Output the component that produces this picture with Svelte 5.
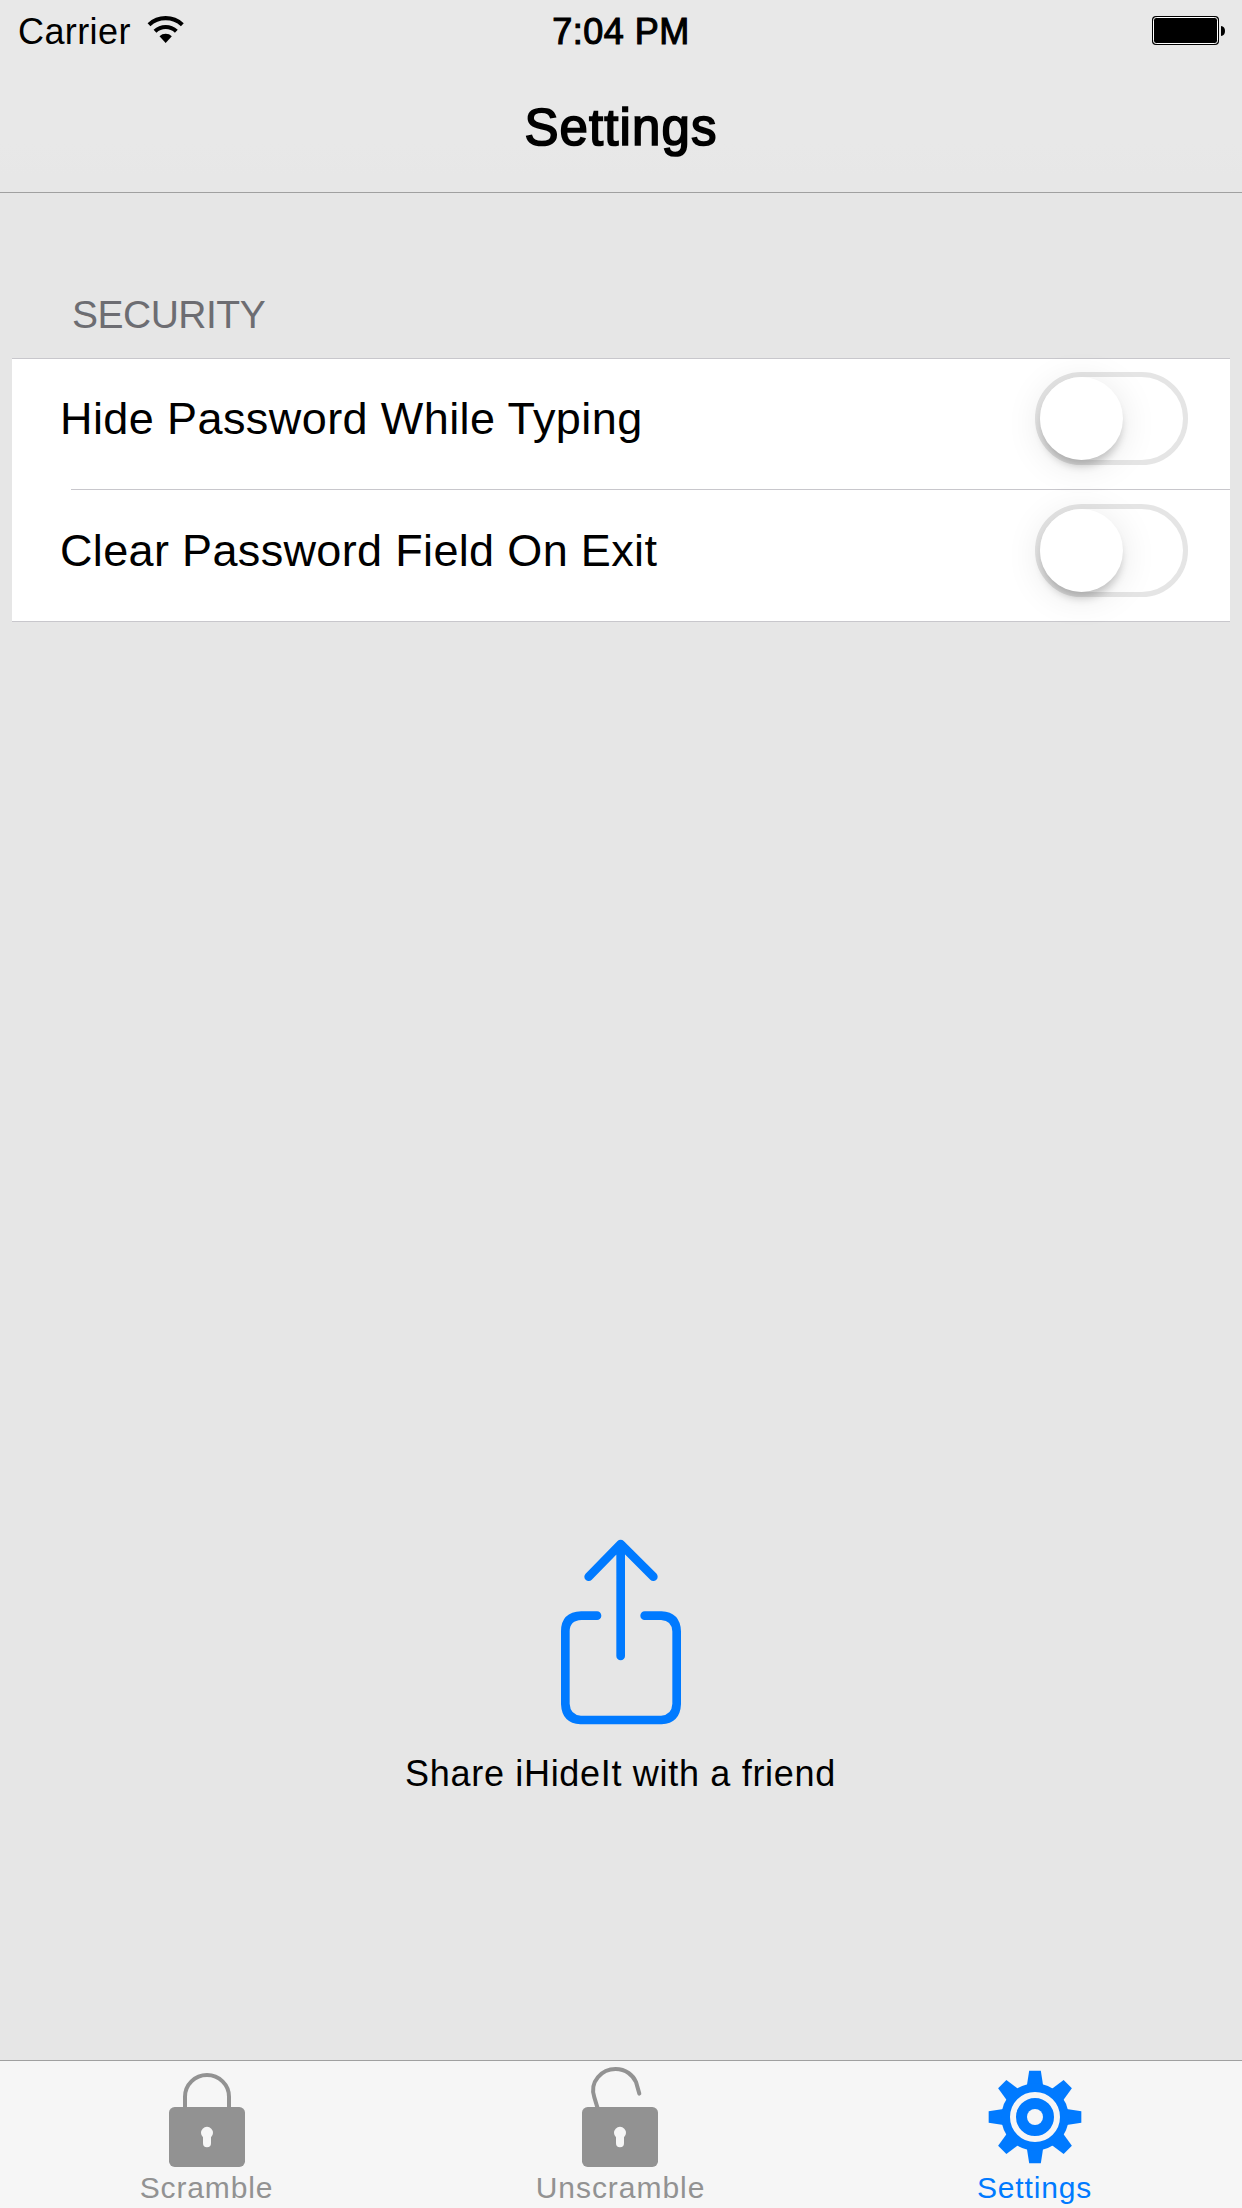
<script>
  let rows = $state([
    { id: 'hide', label: 'Hide Password While Typing', on: false },
    { id: 'clear', label: 'Clear Password Field On Exit', on: false }
  ]);
  const teeth = [0, 45, 90, 135, 180, 225, 270, 315];
</script>

<div class="screen">
  <header>
    <div class="status">
      <div class="left">
        <span class="carrier">Carrier</span>
        <svg class="wifi" viewBox="435 0 120 189" aria-hidden="true">
          <path d="M447 74A73.5 73.5 0 0 1 547 74" fill="none" stroke="#000" stroke-width="12.5" />
          <path d="M465 93.5A47 47 0 0 1 529 93.5" fill="none" stroke="#000" stroke-width="12.5" />
          <path d="M497 129L478.5 108.500A27 27 0 0 1 515.500 108.500Z" />
        </svg>
      </div>
      <span class="time">7:04 PM</span>
      <svg class="battery" viewBox="0 0 426 189" aria-hidden="true">
        <rect x="156" y="48" width="201" height="87" rx="12" />
        <rect x="160.500" y="52.500" width="192" height="78" rx="8" fill="none" stroke="#fff" stroke-width="3" />
        <path d="M363 78Q375 80 375 93T363 108Z" />
      </svg>
    </div>
    <h1>Settings</h1>
  </header>

  <main>
    <h2>SECURITY</h2>
    <section class="card">
      {#each rows as row (row.id)}
        <div class="row {row.id}">
          <span class="label">{row.label}</span>
          <button
            class="switch"
            class:on={row.on}
            role="switch"
            aria-checked={row.on}
            aria-label={row.label}
            onclick={() => (row.on = !row.on)}
          ><span class="knob"></span></button>
        </div>
      {/each}
    </section>

    <div class="share">
      <svg viewBox="3 0 540 660" aria-hidden="true">
        <g fill="none" stroke="#007aff" stroke-width="26" stroke-linecap="round" stroke-linejoin="round">
          <path d="M272 72V408M176 170L272 72L370 170" />
          <path d="M201 287H154Q106 289 106 334V552Q108 597 152 600H394Q438 597 440 552V334Q438 289 394 287H344" />
        </g>
      </svg>
      <span>Share iHideIt with a friend</span>
    </div>
  </main>

  <nav>
    <div class="tab">
      <svg viewBox="-9 33 540 327" aria-hidden="true">
        <path d="M195 175V140A66 65 0 0 1 327 140V175" fill="none" stroke="#929292" stroke-width="12" />
        <rect x="147" y="171" width="228" height="180" rx="17" fill="#929292" />
        <path d="M249 262A18 18 0 1 1 273 262V280A12 12 0 0 1 249 280Z" fill="#f6f6f6" />
      </svg>
      <span>Scramble</span>
    </div>
    <div class="tab wide">
      <svg viewBox="33 33 540 327" aria-hidden="true">
        <path d="M233 175L223 142C207 94 246 57 287 57C318 57 339 76 348 96L358 131" fill="none" stroke="#929292" stroke-width="12" stroke-linecap="round" />
        <rect x="186" y="171" width="228" height="180" rx="17" fill="#929292" />
        <path d="M288 262A18 18 0 1 1 312 262V280A12 12 0 0 1 288 280Z" fill="#f6f6f6" />
      </svg>
      <span>Unscramble</span>
    </div>
    <div class="tab active">
      <svg viewBox="-15 33 540 327" aria-hidden="true">
        <g transform="translate(255 201)" fill="#007aff">
          {#each teeth as angle}
            <path d="M-25 -90L-17.500 -139H17.500L25 -90Z" transform="rotate({angle})" />
          {/each}
          <circle r="101" />
          <circle r="66" fill="none" stroke="#f6f6f6" stroke-width="18" />
          <circle r="24" fill="#f6f6f6" />
        </g>
      </svg>
      <span>Settings</span>
    </div>
  </nav>
</div>

<style>
  :global(body) {
    margin: 0;
  }
  .screen {
    width: 1242px;
    height: 2208px;
    display: flex;
    flex-direction: column;
    overflow: hidden;
    background: #e6e6e6;
    color: #000;
    font-family: 'Liberation Sans', Arial, sans-serif;
  }
  header {
    height: 192px;
    flex: none;
    background: linear-gradient(#e8e8e8 0 144px, #e7e7e7 176px);
    border-bottom: 1px solid #a0a0a0;
  }
  .status {
    display: grid;
    grid-template-columns: 1fr auto 1fr;
    height: 63px;
    font-size: 36px;
    line-height: 63px;
  }
  .left {
    display: flex;
  }
  .carrier {
    box-sizing: border-box;
    width: 145px;
    padding-left: 18px;
    letter-spacing: 0.4px;
  }
  .wifi {
    width: 40px;
    height: 63px;
  }
  .time {
    letter-spacing: 0.5px;
    -webkit-text-stroke: 1.1px #000;
  }
  .battery {
    width: 142px;
    height: 63px;
    justify-self: end;
  }
  h1 {
    margin: 0;
    text-align: center;
    font-size: 51px;
    font-weight: 400;
    line-height: 129px;
    letter-spacing: 1.1px;
    -webkit-text-stroke: 1.7px #000;
  }
  main {
    flex: 1;
    display: flex;
    flex-direction: column;
    min-height: 0;
  }
  h2 {
    margin: 0;
    padding: 78px 0 0 72px;
    height: 87px;
    font-size: 39px;
    font-weight: 400;
    line-height: 87px;
    letter-spacing: -0.5px;
    color: #6d6d72;
  }
  .card {
    margin: 0 12px;
    background: #fff;
    border-top: 1px solid #c8c7cc;
    border-bottom: 1px solid #c8c7cc;
  }
  .row {
    box-sizing: border-box;
    display: flex;
    align-items: center;
    justify-content: space-between;
    padding: 0 42px 11px 48px;
    height: 130px;
    font-size: 45px;
    letter-spacing: 0.41px;
  }
  .row + .row {
    height: 132px;
    border-top: 1px solid #c8c7cc;
    padding-bottom: 10px;
    border-image: linear-gradient(90deg, transparent 60px, #c8c7cc 60px) 1;
    letter-spacing: 0.34px;
  }
  .switch {
    box-sizing: border-box;
    display: flex;
    width: 153px;
    height: 93px;
    padding: 0;
    border: 5px solid #e5e5e5;
    border-radius: 47px;
    background: #fff;
  }
  .switch.on {
    justify-content: flex-end;
    background: #4cd964;
    border-color: #4cd964;
  }
  .knob {
    width: 83px;
    height: 83px;
    border-radius: 50%;
    background: #fff;
    box-shadow:
      0 8px 8px -2px rgba(0, 0, 0, 0.2),
      0 5px 36px rgba(0, 0, 0, 0.1);
  }
  .share {
    margin-top: 898px;
    display: flex;
    flex-direction: column;
    align-items: center;
    font-size: 36px;
    line-height: 68px;
    letter-spacing: 0.69px;
  }
  .share span {
    margin-right: 1px;
  }
  .share svg {
    width: 180px;
    height: 220px;
    filter: blur(0.7px);
  }
  nav {
    display: grid;
    grid-template-columns: repeat(3, 1fr);
    flex: none;
    height: 147px;
    background: #f6f6f6;
    border-top: 1px solid #a0a0a0;
  }
  .tab {
    display: flex;
    flex-direction: column;
    align-items: center;
    color: #929292;
    font-size: 30px;
    line-height: 36px;
    letter-spacing: 0.85px;
  }
  .tab span {
    margin-right: 1px;
  }
  .tab svg {
    width: 180px;
    height: 109px;
  }
  .tab.wide {
    letter-spacing: 0.95px;
  }
  .tab.active {
    color: #007aff;
  }
</style>
